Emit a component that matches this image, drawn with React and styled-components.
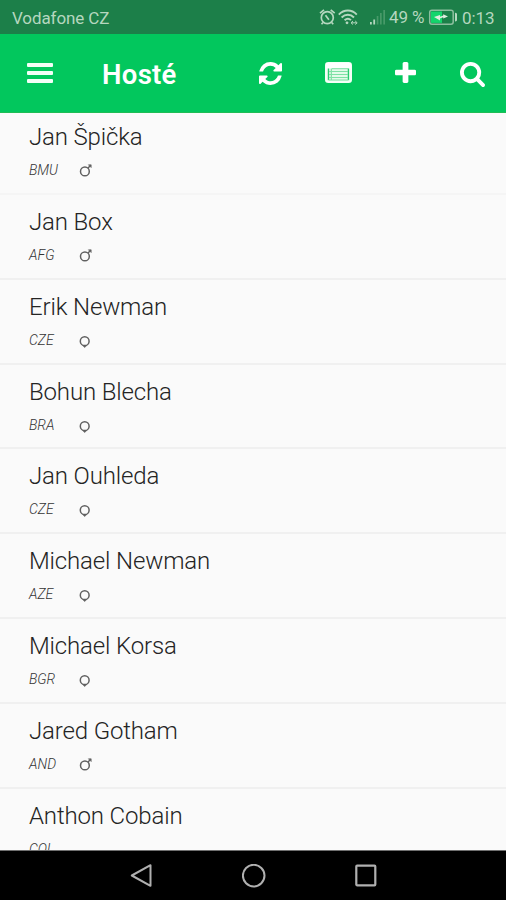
import React from 'react';
import styled, { createGlobalStyle } from 'styled-components';

const GlobalStyle = createGlobalStyle`
  * { box-sizing: border-box; }
  body { margin: 0; background: #fafafa; font-family: Roboto, sans-serif; }
  svg { display: block; }
`;

const Screen = styled.div`
  display: flex;
  flex-direction: column;
  width: 506px;
  height: 900px;
  overflow: hidden;
  background: #fafafa;
`;

const StatusBar = styled.div`
  flex: 0 0 34px;
  min-height: 0;
  display: flex;
  justify-content: space-between;
  padding: 0 11px 0 12px;
  background: #1c7f49;
  color: #b5d7bf;
  font-size: 17px;
  line-height: 36px;
  white-space: nowrap;
`;

const Carrier = styled.span`
  height: 34px;
  letter-spacing: -0.1px;
`;

const StatusGroup = styled.div`
  display: flex;
  height: 34px;
  svg { margin-top: 8px; }
`;

const SignalSpace = styled.span`
  margin-left: 11px;
`;

const Percent = styled.span`
  width: 36px;
  margin: -1px 3px 0 3px;
  letter-spacing: -0.15px;
`;

const Clock = styled.span`
  width: 33px;
  margin-left: 4px;
  letter-spacing: -0.1px;
`;

const Toolbar = styled.header`
  flex: 0 0 79px;
  display: flex;
  align-items: flex-start;
  padding: 28px 21px 0 27px;
  background: #02c75d;
  border-bottom: 1px solid #1fbd55;
  color: #fff;
`;

const MenuButton = styled.button`
  display: flex;
  flex-direction: column;
  gap: 4px;
  width: 26px;
  margin: 1px 0 0;
  padding: 0;
  border: 0;
  background: none;
`;

const MenuBar = styled.span`
  height: 4px;
  border-radius: 1px;
  background: #f4fff7;
`;

const Title = styled.h1`
  flex: 1;
  margin: -4px 0 0 49px;
  font-size: 27.5px;
  font-weight: 600;
  line-height: 34px;
  letter-spacing: 0.3px;
`;

const Actions = styled.div`
  display: flex;
  align-items: flex-start;
`;

const IconButton = styled.button`
  width: ${(p) => p.$width}px;
  margin: 0 0 0 ${(p) => p.$gap || 0}px;
  padding: 0;
  border: 0;
  background: none;
  color: #fff;
`;

const GuestList = styled.ul`
  flex: 1;
  min-height: 0;
  overflow: hidden;
  margin: 0;
  padding: 0;
  list-style: none;
`;

const GuestRow = styled.li`
  height: 84.83px;
  padding: 11px 29px 0;
  border-bottom: 2px solid #f0f0f0;
  &:first-child { height: 81.9px; padding-top: 8px; border-bottom-color: #f5f5f5; }
`;

const GuestName = styled.div`
  font-size: 24px;
  font-weight: 350;
  line-height: 32px;
  letter-spacing: -0.15px;
  color: #242424;
  white-space: nowrap;
`;

const GuestMeta = styled.div`
  display: flex;
  height: 20px;
  margin-top: 7px;
`;

const Country = styled.span`
  width: 50px;
  font-size: 14px;
  font-weight: 300;
  line-height: 20px;
  font-style: italic;
  color: #333;
`;

const NavBar = styled.nav`
  flex: 0 0 50px;
  display: flex;
  align-items: flex-start;
  gap: 89px;
  padding: 13px 0 0 129px;
  border-top: 1px solid #707070;
  background: #000;
`;

const AlarmIcon = () => (
  <svg width="17" height="19" viewBox="0 0 17 19" fill="none" stroke="#b5d7bf" strokeWidth="1.7">
    <circle cx="8.3" cy="9.7" r="6" />
    <path d="M1 5.2 5 1.8M11.7 1.8l4 3.4M6.5 7.2l3.4 4.6M4 14.5l-1.5 1.8M12.7 14.5l1.5 1.8" />
  </svg>
);

const WifiIcon = () => (
  <svg width="22" height="19" viewBox="-2 0 22 19" fill="none" stroke="#b5d7bf" strokeWidth="1.9">
    <path d="M.8 6.6C6 1.2 13.7 1.2 18.8 6.6M3.6 9.5c3.7-3.7 8.8-3.7 12.4 0M6.6 12.2c2-1.8 4.6-1.8 6.4 0" />
    <circle cx="9" cy="14.8" r="1.4" fill="#b5d7bf" stroke="none" />
    <path d="M13.5 14.8h5M15 13l-2 1.8L15 16.5M17.2 13l2 1.8-2 1.7" strokeWidth="1" />
  </svg>
);

const SignalIcon = () => (
  <svg width="17" height="19" viewBox="0 0 17 19">
    <path fill="#b5d7bf" d="M1 14h1.8v2.6H1zM4.3 11.4h1.8v5.2h-1.8z" />
    <path fill="#489a69" d="M7.7 8h1.7v8.6h-1.7zM11 5h1.7v11.6h-1.7zM14.3 2h1.7v14.6h-1.7z" />
  </svg>
);

const BatteryIcon = () => (
  <svg width="30" height="19" viewBox="0 0 30 19">
    <rect x="1.7" y="2.2" width="23.5" height="14" rx="2.2" fill="none" stroke="#8dbf9f" strokeWidth="1.5" />
    <path d="M3 3.5h11v11.4H3z" fill="#13d56c" />
    <path d="M6 9.1 12 7v1.8l3.2-1.2V6.2l4.8 2.3-4.8 1.9V9.3l-3.2 1.3v1.8z" fill="#e0eedf" />
    <path d="M27 4.8c2 .2 2 .9 2 2v4.8c0 1.1 0 1.8-2 2z" fill="#b5d7bf" />
  </svg>
);

const RefreshIcon = () => (
  <svg width="23" height="23" viewBox="128 128 1536 1536" fill="currentColor">
    <path d="M1639 1056q0 5-1 7-64 268-268 434.5t-478 166.5q-146 0-282.5-55t-243.5-157l-129 129q-19 19-45 19t-45-19-19-45v-448q0-26 19-45t45-19h448q26 0 45 19t19 45-19 45l-137 137q71 66 161 102t187 36q134 0 250-65t186-179q11-17 53-117 8-23 30-23h192q13 0 22.5 9.5t9.5 22.5zm25-800v448q0 26-19 45t-45 19h-448q-26 0-45-19t-19-45 19-45l138-138q-148-137-349-137-134 0-250 65t-186 179q-11 17-53 117-8 23-30 23h-199q-13 0-22.5-9.5t-9.5-22.5v-7q65-268 270-434.5t480-166.5q146 0 284 55.5t245 156.5l130-129q19-19 45-19t45 19 19 45z" />
  </svg>
);

const ListIcon = () => (
  <svg width="27" height="21" viewBox="0 0 27 21">
    <rect x="1" y="1" width="25" height="19" rx="2.3" fill="#e3fbea" stroke="#f4fff7" strokeWidth="2" />
    <path d="M1 1h25v5.5H1z" fill="#fff" />
    <path d="M3.5 6.5v11.5M23.4 6.5v11.5" stroke="#2acb70" strokeWidth="1.3" />
    <path d="M6.3 6.5v11.5" stroke="#6edc98" strokeWidth="1" />
    <path d="M4 9.5h19M4 12.5h19M4 15.5h19M3.5 18h20M7 6.7h16" stroke="#7ee2a5" strokeWidth="1" />
  </svg>
);

const PlusIcon = () => (
  <svg width="21" height="21" viewBox="192 128 1408 1408" fill="currentColor">
    <path d="M1600 736v192q0 40-28 68t-68 28h-416v416q0 40-28 68t-68 28h-192q-40 0-68-28t-28-68v-416h-416q-40 0-68-28t-28-68v-192q0-40 28-68t68-28h416v-416q0-40 28-68t68-28h192q40 0 68 28t28 68v416h416q40 0 68 28t28 68z" />
  </svg>
);

const SearchIcon = () => (
  <svg width="25" height="25" viewBox="64 128 1664 1664" fill="currentColor">
    <path d="M1216 832q0-185-131.5-316.5t-316.5-131.5-316.5 131.5-131.5 316.5 131.5 316.5 316.5 131.5 316.5-131.5 131.5-316.5zm512 832q0 52-38 90t-90 38q-54 0-90-38l-343-342q-179 124-399 124-143 0-273.5-55.5t-225-150-150-225-55.5-273.5 55.5-273.5 150-225 225-150 273.5-55.5 273.5 55.5 225 150 150 225 55.5 273.5q0 220-124 399l343 343q37 37 37 90z" />
  </svg>
);

const GenderIcon = ({ male }) => (
  <svg width="15" height="20" viewBox="0 0 15 20" fill="none" stroke="#606060" strokeWidth="1.5">
    {male ? (
      <>
        <circle cx="5.9" cy="11.4" r="4.4" />
        <path d="M9 8l2-2" />
        <path d="M9.4 4.8h2.8v2.8z" fill="#606060" strokeWidth="0.6" />
      </>
    ) : (
      <>
        <circle cx="5.7" cy="11.2" r="4.4" />
        <path d="M4.1 15.8h3.2L5.7 17.6z" fill="#606060" strokeWidth="0.6" />
      </>
    )}
  </svg>
);

const guests = [
  { name: 'Jan Špička', country: 'BMU', gender: 'm' },
  { name: 'Jan Box', country: 'AFG', gender: 'm' },
  { name: 'Erik Newman', country: 'CZE', gender: 'f' },
  { name: 'Bohun Blecha', country: 'BRA', gender: 'f' },
  { name: 'Jan Ouhleda', country: 'CZE', gender: 'f' },
  { name: 'Michael Newman', country: 'AZE', gender: 'f' },
  { name: 'Michael Korsa', country: 'BGR', gender: 'f' },
  { name: 'Jared Gotham', country: 'AND', gender: 'm' },
  { name: 'Anthon Cobain', country: 'COL' },
];

export default function App() {
  return (
    <Screen>
      <GlobalStyle />
      <StatusBar>
        <Carrier>Vodafone CZ</Carrier>
        <StatusGroup>
          <AlarmIcon />
          <WifiIcon />
          <SignalSpace><SignalIcon /></SignalSpace>
          <Percent>49 %</Percent>
          <BatteryIcon />
          <Clock>0:13</Clock>
        </StatusGroup>
      </StatusBar>
      <Toolbar>
        <MenuButton aria-label="Menu">
          <MenuBar />
          <MenuBar />
          <MenuBar />
        </MenuButton>
        <Title>Hosté</Title>
        <Actions>
          <IconButton $width={23}><RefreshIcon /></IconButton>
          <IconButton $width={27} $gap={43}><ListIcon /></IconButton>
          <IconButton $width={21} $gap={43}><PlusIcon /></IconButton>
          <IconButton $width={25} $gap={44}><SearchIcon /></IconButton>
        </Actions>
      </Toolbar>
      <GuestList>
        {guests.map((g) => (
          <GuestRow key={g.name}>
            <GuestName>{g.name}</GuestName>
            <GuestMeta>
              <Country>{g.country}</Country>
              {g.gender && <GenderIcon male={g.gender === 'm'} />}
            </GuestMeta>
          </GuestRow>
        ))}
      </GuestList>
      <NavBar>
        <svg width="24" height="25" viewBox="0 0 24 25" fill="none" stroke="#b0b0b0" strokeWidth="2" strokeLinejoin="round">
          <path d="M21.5 1.2v20.6L2.8 11.5z" />
        </svg>
        <svg width="24" height="25" viewBox="0 0 24 25" fill="none" stroke="#b0b0b0" strokeWidth="2">
          <circle cx="11.7" cy="11.6" r="10.8" />
        </svg>
        <svg width="22" height="25" viewBox="0 0 22 25" fill="none" stroke="#b0b0b0" strokeWidth="2.2">
          <rect x="1.3" y="1.7" width="19" height="19.6" rx="0.8" />
        </svg>
      </NavBar>
    </Screen>
  );
}
